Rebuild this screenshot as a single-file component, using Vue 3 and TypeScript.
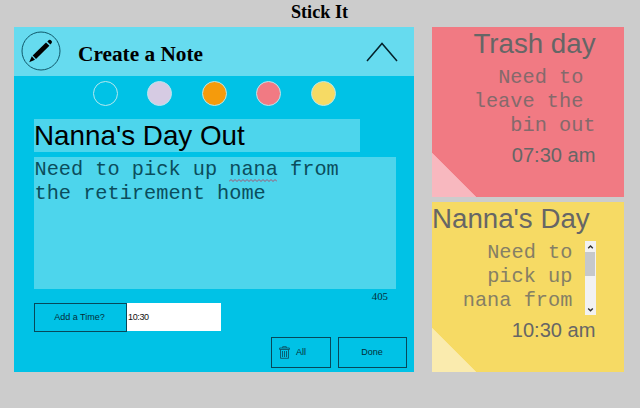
<script setup lang="ts">
interface Swatch { name: string; color: string }
interface Note { title: string; lines: string[]; time: string; tone: string; scroll: boolean }

const swatches: Swatch[] = [
  { name: 'blue', color: '#00c2e6' },
  { name: 'lilac', color: '#d6cbe3' },
  { name: 'orange', color: '#f59b0c' },
  { name: 'red', color: '#f17a83' },
  { name: 'yellow', color: '#f6da64' },
]

const notes: Note[] = [
  { title: 'Trash day', lines: ['Need to ', 'leave the ', 'bin out'], time: '07:30 am', tone: 'red', scroll: false },
  { title: "Nanna's Day", lines: ['Need to ', 'pick up ', 'nana from '], time: '10:30 am', tone: 'yellow', scroll: true },
]
</script>

<template>
  <div class="page">
    <h1 class="brand">Stick It</h1>
    <main class="board">
      <section class="panel">
        <header class="head">
          <svg class="pen" viewBox="0 0 40 40">
            <circle cx="20" cy="20" r="19" fill="none" stroke="#10586a" stroke-width="1" />
            <path d="M8.2 31.3 L10.8 25.3 L14 28.7 Z" />
            <path d="M11.7 24.6 L25 11.4 L28.4 14.8 L15 28 Z" />
            <path d="M26.3 10.4 L27.8 9 Q29 8.2 30.2 9.4 Q31.6 10.8 30.7 12 L29.3 13.5 Z" />
          </svg>
          <h2 class="heading">Create a Note</h2>
          <svg class="chevron" viewBox="0 0 32 20"><path d="M1 19 L16 1.4 L31 19" fill="none" stroke="#04222b" stroke-width="1.5" /></svg>
        </header>
        <div class="swatches">
          <span v-for="s in swatches" :key="s.name" class="swatch" :style="{ background: s.color }"></span>
        </div>
        <div class="title-field">Nanna's Day Out</div>
        <div class="text-field">Need to pick up <span class="typo">nana<svg class="squiggle" viewBox="0 0 48 3"><path d="M0 2.5 l2 -2 l2 2 l2 -2 l2 2 l2 -2 l2 2 l2 -2 l2 2 l2 -2 l2 2 l2 -2 l2 2 l2 -2 l2 2 l2 -2 l2 2 l2 -2 l2 2 l2 -2 l2 2 l2 -2 l2 2 l2 -2 l2 2" fill="none" stroke="#a8506e" stroke-width="1" /></svg></span> from<br>the retirement home</div>
        <div class="count">405</div>
        <div class="time-row">
          <button class="btn time-btn">Add a Time?</button>
          <div class="time-input">10:30</div>
        </div>
        <div class="actions">
          <button class="btn all-btn">
            <svg class="trash" viewBox="0 0 11 13" fill="none" stroke="#0b5568" stroke-width="0.9">
              <path d="M0.6 3.5 V2 H10.4 V3.5 Z M3.7 2 V0.7 H7.3 V2 M1.5 3.5 V12.3 H9.5 V3.5 M3.5 5 V11 M5.5 5 V11 M7.5 5 V11" />
            </svg>
            <span>All</span>
          </button>
          <button class="btn done-btn">Done</button>
        </div>
      </section>
      <aside class="notes">
        <article v-for="n in notes" :key="n.title" class="note" :class="n.tone">
          <h3 class="note-title">{{ n.title }}</h3>
          <div class="note-body">
            <div class="note-text"><div v-for="l in n.lines" :key="l">{{ l }}</div></div>
            <div v-if="n.scroll" class="bar">
              <svg class="arrow" viewBox="0 0 11 11"><path d="M3.2 7.3 L5.5 5 L7.8 7.3" /></svg>
              <div class="thumb"></div>
              <svg class="arrow down" viewBox="0 0 11 11"><path d="M3.2 4.5 L5.5 6.8 L7.8 4.5" /></svg>
            </div>
          </div>
          <div class="note-time">{{ n.time }}</div>
        </article>
      </aside>
    </main>
  </div>
</template>

<style>
body { background: #cccccc; }
</style>

<style scoped>
.page { width: 640px; height: 408px; overflow: hidden; background: #cccccc; color: #000; font-family: "Liberation Serif", serif; }
h1, h2, h3 { margin: 0; }
.brand { height: 27px; line-height: 24px; font-size: 18.2px; text-align: center; padding-right: 1px; box-sizing: border-box; }
.board { display: flex; gap: 18px; padding-left: 14px; }
.panel { width: 400px; height: 345px; background: #00c2e6; display: flex; flex-direction: column; }
.head { height: 49px; flex: none; background: #66dbef; display: flex; box-sizing: border-box; padding: 4px 16px 0 7px; }
.pen { width: 40px; height: 40px; }
.heading { margin-left: 17px; font-size: 21.3px; line-height: 24px; padding-top: 11px; flex: 1; white-space: nowrap; }
.chevron { width: 32px; height: 20px; margin-top: 11px; }
.swatches { display: flex; gap: 29.6px; padding: 5px 0 0 78.6px; height: 38px; }
.swatch { width: 25px; height: 25px; flex: none; box-sizing: border-box; border: 1px solid #b5e8ee; border-radius: 50%; }
.title-field { margin-left: 20px; width: 326px; height: 33px; background: #4dd5ec; font: 27.8px/34px "Liberation Sans", sans-serif; white-space: nowrap; }
.text-field { margin: 5px 0 0 20px; width: 362px; height: 132px; box-sizing: border-box; padding: 1px 0 0 0.5px; background: #4dd5ec; font: 20.3px/24px "Liberation Mono", monospace; color: #0b4d5c; white-space: pre; }
.typo { position: relative; }
.squiggle { position: absolute; left: 0; bottom: -1px; width: 48px; height: 3px; }
.count { height: 14px; line-height: 15px; text-align: right; padding-right: 26px; font-size: 10.8px; color: #042e38; }
.time-row { display: flex; padding-left: 20px; }
.btn { font: 9px/1 "Liberation Sans", sans-serif; color: #042e38; background: transparent; border: 1px solid #06485a; border-radius: 0; box-sizing: border-box; padding: 0; }
.time-btn { width: 93px; height: 29px; padding-right: 2px; }
.time-input { width: 94px; height: 28px; background: #fff; font: 9px/28px "Liberation Sans", sans-serif; letter-spacing: -0.35px; color: #111; padding-left: 1px; box-sizing: border-box; }
.actions { display: flex; gap: 7px; padding: 5px 0 0 257px; }
.all-btn { width: 60px; height: 31px; display: flex; align-items: center; gap: 6px; padding-left: 7px; }
.trash { width: 11px; height: 13px; }
.done-btn { width: 69px; height: 31px; padding-right: 1px; }
.notes { display: flex; flex-direction: column; gap: 5.5px; }
.note { width: 192px; height: 169.5px; box-sizing: border-box; padding-right: 28.5px; color: #666; }
.red { background: linear-gradient(45deg, #f8b8bf 31px, transparent 31.7px) #f17a83; }
.yellow { background: linear-gradient(45deg, #faebae 31px, transparent 31.7px) #f6da64; }
.note-title { font: 27.7px/34px "Liberation Sans", sans-serif; text-align: right; white-space: nowrap; }
.yellow .note-title { text-align: left; }
.note-body { display: flex; justify-content: flex-end; height: 78px; box-sizing: border-box; padding-top: 5px; }
.note-text { font: 20.3px/24px "Liberation Mono", monospace; white-space: pre; text-align: right; opacity: .78; }
.bar { width: 11px; height: 74px; background: #f2f2f2; display: flex; flex-direction: column; }
.arrow { width: 11px; height: 11px; fill: none; stroke: #333; stroke-width: 1.4; }
.thumb { height: 24px; margin: 0 0.5px; background: #c6c8ca; }
.down { margin-top: auto; }
.note-time { font: 20.1px/33px "Liberation Sans", sans-serif; text-align: right; }
</style>
